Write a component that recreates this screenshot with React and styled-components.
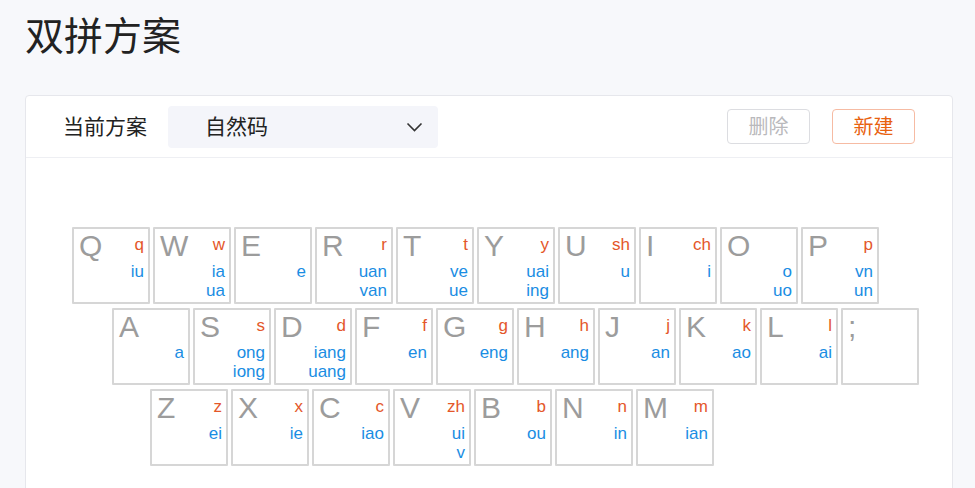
import React from 'react'
import styled, { createGlobalStyle } from 'styled-components'

const GlobalStyle = createGlobalStyle`
  html, body {
    margin: 0;
    padding: 0;
    background: #f7f8fb;
    font-family: "Noto Sans CJK SC", "Noto Sans", sans-serif;
    overflow: hidden;
  }
`

const Page = styled.div`
  padding: 0 22px 0 25px;
`

const Title = styled.h1`
  margin: 0;
  padding-top: 8px;
  height: 87px;
  font-size: 39px;
  font-weight: 400;
  line-height: 50px;
  color: #222;
`

const Card = styled.div`
  background: #fff;
  border: 1px solid #e6e7ec;
  border-radius: 4px;
  min-height: 460px;
`

const Header = styled.div`
  display: flex;
  align-items: center;
  height: 61px;
  padding: 0 37px;
  border-bottom: 1px solid #eeeff3;
  line-height: 1;
`

const Label = styled.span`
  font-size: 21px;
  color: #222;
  width: 105px;
  margin-top: -2px;
`

const Select = styled.div`
  display: flex;
  align-items: center;
  justify-content: space-between;
  width: 270px;
  height: 42px;
  box-sizing: border-box;
  padding: 0 15px 0 37px;
  background: #f4f5fa;
  border-radius: 4px;
  font-size: 21px;
  color: #222;

  span {
    margin-top: -2px;
  }
`

const Actions = styled.div`
  margin-left: auto;
  display: flex;
  gap: 22px;
`

const Button = styled.button`
  width: 83px;
  height: 35px;
  border-radius: 4px;
  background: #fff;
  font-family: inherit;
  font-size: 20px;
  line-height: 1;
  padding: 0 0 2px;
  border: 1px solid ${p => (p.$primary ? '#f6bba3' : '#dcdde1')};
  color: ${p => (p.$primary ? '#e8620f' : '#b9b9bc')};
`

const Board = styled.div`
  padding: 69px 0 40px 46px;
  display: flex;
  flex-direction: column;
  gap: 4px;
  font-family: "Liberation Sans", Arial, sans-serif;
`

const Row = styled.div`
  display: flex;
  gap: 3px;
  margin-left: ${p => p.$indent}px;
`

const Key = styled.div`
  width: 78px;
  height: 77px;
  box-sizing: border-box;
  border: 2px solid #d6d6d6;
  border-radius: 1px;
  display: flex;
  justify-content: space-between;
  padding: 2px 4px 0 5px;
`

const Letter = styled.span`
  font-size: 30px;
  line-height: 30px;
  color: #9c9c9c;
`

const Side = styled.div`
  display: flex;
  flex-direction: column;
  align-items: flex-end;
  padding-top: 4px;
  font-size: 17px;
  line-height: 19px;
`

const Initial = styled.span`
  color: #e4572a;
  height: 19px;
  margin-bottom: 8px;
`

const Final = styled.span`
  color: #1a8de3;
`

const rows = [
  {
    indent: 0,
    keys: [
      ['Q', 'q', ['iu']],
      ['W', 'w', ['ia', 'ua']],
      ['E', '', ['e']],
      ['R', 'r', ['uan', 'van']],
      ['T', 't', ['ve', 'ue']],
      ['Y', 'y', ['uai', 'ing']],
      ['U', 'sh', ['u']],
      ['I', 'ch', ['i']],
      ['O', '', ['o', 'uo']],
      ['P', 'p', ['vn', 'un']],
    ],
  },
  {
    indent: 40,
    keys: [
      ['A', '', ['a']],
      ['S', 's', ['ong', 'iong']],
      ['D', 'd', ['iang', 'uang']],
      ['F', 'f', ['en']],
      ['G', 'g', ['eng']],
      ['H', 'h', ['ang']],
      ['J', 'j', ['an']],
      ['K', 'k', ['ao']],
      ['L', 'l', ['ai']],
      [';', '', []],
    ],
  },
  {
    indent: 78,
    keys: [
      ['Z', 'z', ['ei']],
      ['X', 'x', ['ie']],
      ['C', 'c', ['iao']],
      ['V', 'zh', ['ui', 'v']],
      ['B', 'b', ['ou']],
      ['N', 'n', ['in']],
      ['M', 'm', ['ian']],
    ],
  },
]

const Chevron = () => (
  <svg width="17" height="10" viewBox="0 0 17 10" fill="none">
    <path d="M1.5 1.5 L8.5 8.5 L15.5 1.5" stroke="#333" strokeWidth="1.6" />
  </svg>
)

const App = () => {
  return (
    <>
      <GlobalStyle />
      <Page>
        <Title>双拼方案</Title>
        <Card>
          <Header>
            <Label>当前方案</Label>
            <Select>
              <span>自然码</span>
              <Chevron />
            </Select>
            <Actions>
              <Button>删除</Button>
              <Button $primary>新建</Button>
            </Actions>
          </Header>
          <Board>
            {rows.map((row, i) => (
              <Row key={i} $indent={row.indent}>
                {row.keys.map(([letter, initial, finals]) => (
                  <Key key={letter}>
                    <Letter>{letter}</Letter>
                    <Side>
                      <Initial>{initial}</Initial>
                      {finals.map(f => (
                        <Final key={f}>{f}</Final>
                      ))}
                    </Side>
                  </Key>
                ))}
              </Row>
            ))}
          </Board>
        </Card>
      </Page>
    </>
  )
}

export default App
